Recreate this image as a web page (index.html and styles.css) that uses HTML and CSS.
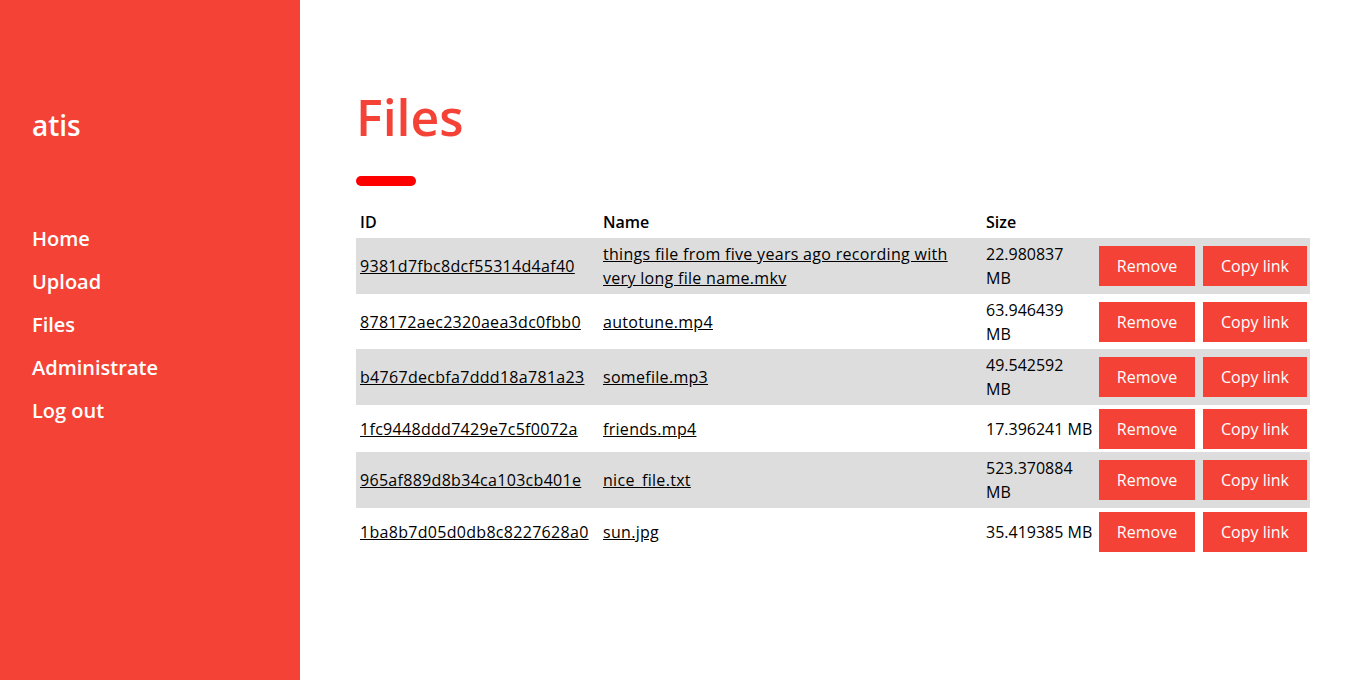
FILE: index.html
```html
<!DOCTYPE html>
<html lang="en">
<head>
<meta charset="utf-8">
<title>Files - atis</title>
<link rel="stylesheet" href="styles.css">
</head>
<body>
<aside class="sidebar">
  <div class="brand">atis</div>
  <nav class="nav">
    <a href="#" class="nav-link">Home</a>
    <a href="#" class="nav-link">Upload</a>
    <a href="#" class="nav-link">Files</a>
    <a href="#" class="nav-link">Administrate</a>
    <a href="#" class="nav-link">Log out</a>
  </nav>
</aside>
<main class="main">
  <h1 class="title">Files</h1>
  <div class="title-bar"></div>
  <table class="files">
    <colgroup>
      <col class="col-id">
      <col class="col-name">
      <col class="col-size">
      <col class="col-remove">
      <col class="col-copy">
    </colgroup>
    <thead>
      <tr><th>ID</th><th>Name</th><th>Size</th><th></th><th></th></tr>
    </thead>
    <tbody>
      <tr class="odd">
        <td><a href="#">9381d7fbc8dcf55314d4af40</a></td>
        <td><a href="#">things file from five years ago recording with very long file name.mkv</a></td>
        <td>22.980837 MB</td>
        <td><button class="btn btn-remove">Remove</button></td>
        <td><button class="btn btn-copy">Copy link</button></td>
      </tr>
      <tr>
        <td><a href="#">878172aec2320aea3dc0fbb0</a></td>
        <td><a href="#">autotune.mp4</a></td>
        <td>63.946439 MB</td>
        <td><button class="btn btn-remove">Remove</button></td>
        <td><button class="btn btn-copy">Copy link</button></td>
      </tr>
      <tr class="odd">
        <td><a href="#">b4767decbfa7ddd18a781a23</a></td>
        <td><a href="#">somefile.mp3</a></td>
        <td>49.542592 MB</td>
        <td><button class="btn btn-remove">Remove</button></td>
        <td><button class="btn btn-copy">Copy link</button></td>
      </tr>
      <tr>
        <td><a href="#">1fc9448ddd7429e7c5f0072a</a></td>
        <td><a href="#">friends.mp4</a></td>
        <td class="nowrap">17.396241 MB</td>
        <td><button class="btn btn-remove">Remove</button></td>
        <td><button class="btn btn-copy">Copy link</button></td>
      </tr>
      <tr class="odd">
        <td><a href="#">965af889d8b34ca103cb401e</a></td>
        <td><a href="#">nice_file.txt</a></td>
        <td>523.370884 MB</td>
        <td><button class="btn btn-remove">Remove</button></td>
        <td><button class="btn btn-copy">Copy link</button></td>
      </tr>
      <tr>
        <td><a href="#">1ba8b7d05d0db8c8227628a0</a></td>
        <td><a href="#">sun.jpg</a></td>
        <td class="nowrap">35.419385 MB</td>
        <td><button class="btn btn-remove">Remove</button></td>
        <td><button class="btn btn-copy">Copy link</button></td>
      </tr>
    </tbody>
  </table>
</main>
</body>
</html>
```

FILE: styles.css
```css
html, body {
  margin: 0;
  padding: 0;
}

body {
  display: flex;
  min-height: 100vh;
  font-family: "Open Sans", "Noto Sans", sans-serif;
  color: #000;
  background: #fff;
}

.sidebar {
  width: 300px;
  flex: 0 0 300px;
  background: #f44336;
  color: #fff;
  padding: 105px 32px 0;
  box-sizing: border-box;
}

.brand {
  font-size: 28px;
  font-weight: 600;
  line-height: 40px;
}

.nav {
  display: flex;
  flex-direction: column;
  margin-top: 72px;
}

.nav-link {
  color: #fff;
  text-decoration: none;
  font-size: 20px;
  font-weight: 600;
  line-height: 43px;
}

.main {
  flex: 1;
  padding: 87px 56px 0;
}

.title {
  margin: 0;
  font-size: 50px;
  font-weight: 600;
  line-height: 60px;
  color: #f44336;
}

.title-bar {
  width: 60px;
  height: 10px;
  border-radius: 5px;
  background: #ff0000;
  margin-top: 29px;
}

.files {
  margin-top: 20px;
  border-collapse: collapse;
  table-layout: fixed;
  width: 954px;
  font-size: 16px;
  line-height: 24px;
}

.col-id { width: 243px; }
.col-name { width: 383px; }
.col-size { width: 113px; }
.col-remove { width: 104px; }
.col-copy { width: 111px; }

.files th {
  text-align: left;
  font-weight: 600;
  padding: 4px;
}

.files td {
  padding: 4px 4px 3.5px;
  vertical-align: middle;
}

.files tr.odd {
  background: #dddddd;
}

.files a {
  color: #000;
  text-decoration: underline;
  letter-spacing: 0.3px;
}

.nowrap {
  white-space: nowrap;
}

.btn {
  display: block;
  height: 40px;
  border: none;
  border-radius: 0;
  background: #f44336;
  color: #fff;
  font-family: inherit;
  font-size: 16px;
  padding: 0;
  cursor: pointer;
}

.btn-remove { width: 96px; }
.btn-copy { width: 104px; }
```
